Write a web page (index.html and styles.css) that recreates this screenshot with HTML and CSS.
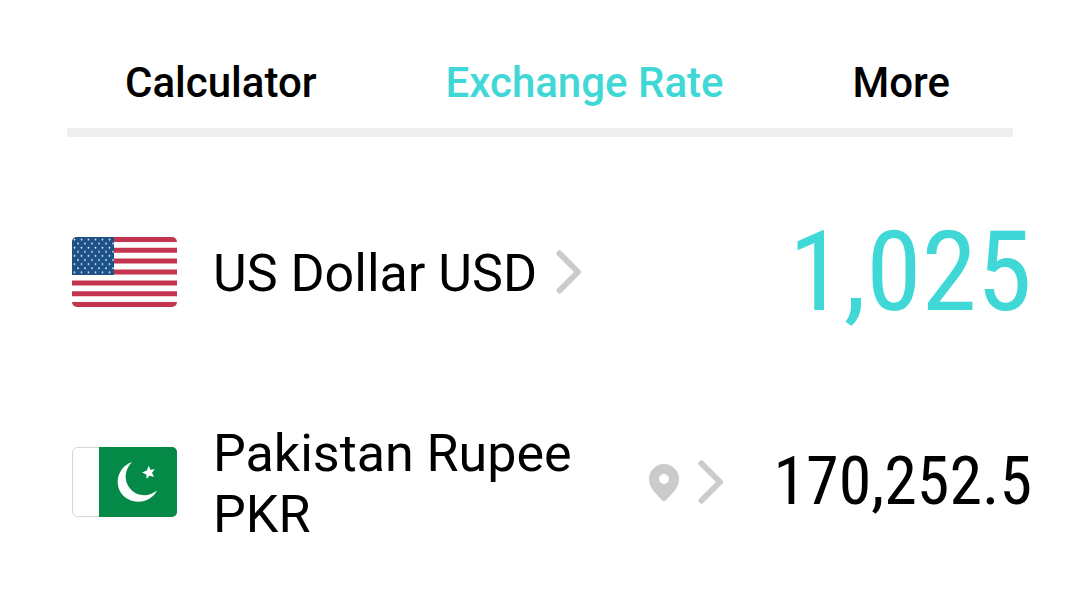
FILE: index.html
```html
<!DOCTYPE html>
<html lang="en">
<head>
<meta charset="utf-8">
<meta name="viewport" content="width=device-width, initial-scale=1">
<title>Exchange Rate</title>
<link rel="stylesheet" href="styles.css">
</head>
<body>
<nav class="tabs">
  <button class="tab" type="button">Calculator</button>
  <button class="tab tab-active" type="button" aria-current="page">Exchange Rate</button>
  <button class="tab" type="button">More</button>
</nav>
<main class="rates">
  <section class="rate">
    <svg class="flag" viewBox="0 0 105 70" aria-hidden="true">
      <defs>
        <clipPath id="round"><rect width="105" height="70" rx="5"/></clipPath>
        <pattern id="stars" width="7" height="8.2" patternUnits="userSpaceOnUse">
          <circle cx="2.5" cy="2.6" r="0.9" fill="#e6eef5"/>
          <circle cx="6" cy="6.7" r="0.9" fill="#e6eef5"/>
        </pattern>
      </defs>
      <g clip-path="url(#round)">
        <rect width="105" height="70" fill="#fff"/>
        <path d="M0 2.5H105M0 13.3H105M0 24.1H105M0 34.9H105M0 45.9H105M0 56.7H105M0 67.5H105" stroke="#c3354f" stroke-width="5"/>
        <rect width="42" height="38" fill="#1d5288"/>
        <rect width="42" height="38" fill="url(#stars)"/>
      </g>
    </svg>
    <button class="currency" type="button">
      <span class="name">US Dollar USD</span>
      <svg class="chevron" viewBox="0 0 26 44" aria-hidden="true"><path d="M3.500 3.500L22 22L3.500 40.500"/></svg>
    </button>
    <output class="amount amount-main">1,025</output>
  </section>
  <section class="rate">
    <svg class="flag" viewBox="0 0 105 70" aria-hidden="true">
      <rect x=".5" y=".5" width="104" height="69" rx="5" fill="#fff" stroke="#d5d5d5"/>
      <path d="M27 0H100a5 5 0 0 1 5 5V65a5 5 0 0 1-5 5H27Z" fill="#048a46"/>
      <path d="M60 15C43 21 41 43 55 51.500C66 58 80 54 85 43.500C76 51 64 49 58 41.500C51 33 53 22 60 15Z" fill="#fff"/>
      <path d="M76.800 18.800L78.400 22.800L82.800 22.300L80 25.800L82 29.800L77.600 28.700L74.600 31.700L74.300 27.500L70 25.400L74.800 23.600Z" fill="#fff"/>
    </svg>
    <button class="currency" type="button">
      <span class="name">Pakistan Rupee PKR</span>
      <svg class="pin" viewBox="0 0 30 37" role="img" aria-label="Current location"><path fill-rule="evenodd" d="M15 0A15 15 0 0 0 0 15C0 23 5 28 13 36.200Q15 37.800 17 36.200C25 28 30 23 30 15A15 15 0 0 0 15 0ZM15 10a5 5 0 1 1 0 10a5 5 0 0 1 0-10Z"/></svg>
      <svg class="chevron" viewBox="0 0 26 44" aria-hidden="true"><path d="M3.500 3.500L22 22L3.500 40.500"/></svg>
    </button>
    <output class="amount">170,252.5</output>
  </section>
</main>
</body>
</html>
```
FILE: styles.css
```css
* { box-sizing: border-box; }
body {
  margin: 0;
  background: #fff;
  color: #000;
  font-family: Roboto, "Liberation Sans", sans-serif;
}
button {
  padding: 0;
  border: 0;
  background: none;
  color: inherit;
  font: inherit;
  cursor: pointer;
}
.tabs {
  display: flex;
  justify-content: space-between;
  margin: 0 67px;
  padding: 57px 63px 19px 58px;
  border-bottom: 9px solid #efefef;
}
.tab {
  font-size: 42px;
  font-weight: 500;
  line-height: 52px;
}
.tab-active { color: #40d8d6; }
.rates {
  display: grid;
  gap: 60px;
  padding: 60px 48px 0 72px;
}
.rate {
  display: flex;
  align-items: center;
  min-height: 150px;
}
.flag {
  flex: none;
  width: 105px;
  height: 70px;
}
.currency {
  display: flex;
  flex: 1;
  align-items: center;
  margin-left: 36px;
  text-align: left;
}
.name {
  padding-top: 3px;
  font-size: 52px;
  line-height: 61px;
}
.chevron {
  flex: none;
  width: 26px;
  height: 44px;
  margin-left: 19px;
  fill: none;
  stroke: #cbcbcb;
  stroke-width: 6;
  stroke-linecap: round;
  stroke-linejoin: round;
}
.pin {
  flex: none;
  width: 30px;
  height: 37px;
  fill: #cbcbcb;
}
.amount {
  margin-left: 50px;
  font-family: "Roboto Condensed", "Liberation Sans Narrow", sans-serif;
  font-size: 66px;
  line-height: 1;
}
.amount-main {
  color: #40d8d6;
  font-size: 112px;
}
```
